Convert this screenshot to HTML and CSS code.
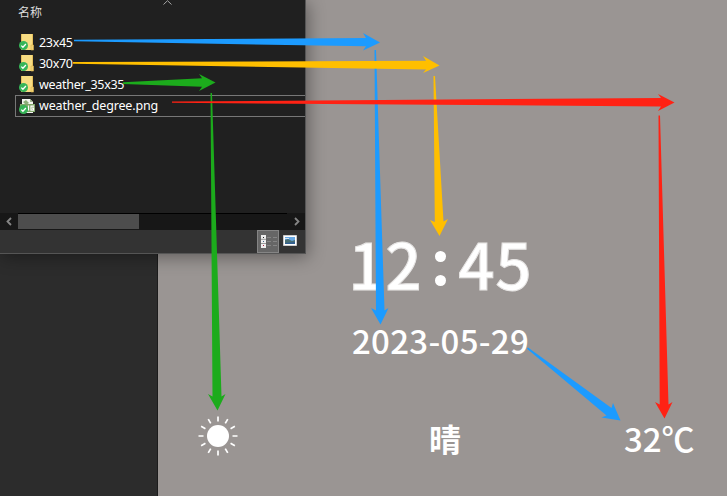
FILE: index.html
```html
<!DOCTYPE html>
<html lang="zh-CN">
<head>
<meta charset="utf-8">
<title>名称</title>
<link rel="stylesheet" href="styles.css">
</head>
<body>
<main class="desktop">
  <div class="side-window"></div>

  <section class="clock">
    <div class="time"><span>1</span><span>2</span><span class="colon"><i></i><i></i></span><span>4</span><span>5</span></div>
    <div class="date">2023-05-29</div>
    <div class="weather">
      <svg class="sun" viewBox="-20 -20 40 40">
        <circle r="11" fill="#fff"/>
        <g stroke="#fff" stroke-width="1.7">
          <path id="rays" d="M0-19.5V-14.5M0 14.5V19.5M-19.5 0H-14.5M14.5 0H19.5"/>
          <use href="#rays" transform="rotate(30)"/>
          <use href="#rays" transform="rotate(60)"/>
        </g>
      </svg>
      <span class="condition">晴</span>
      <span class="degree">32℃</span>
    </div>
  </section>

  <section class="explorer">
    <header class="column-head">
      <span>名称</span>
      <svg class="sort" viewBox="0 0 9 5"><path d="M.5 4.5 4.5.7 8.5 4.5" fill="none" stroke="#a5a5a5"/></svg>
    </header>
    <ul class="files">
      <li><svg class="icon" viewBox="0 0 16 17"><use href="#folder"/></svg><span>23x45</span></li>
      <li><svg class="icon" viewBox="0 0 16 17"><use href="#folder"/></svg><span>30x70</span></li>
      <li><svg class="icon" viewBox="0 0 16 17"><use href="#folder"/></svg><span>weather_35x35</span></li>
      <li class="selected">
        <svg class="icon" viewBox="0 0 16 17">
          <path d="M3 1h8l3 3v11H3z" fill="#f3f6f0"/><path d="M11 1v3h3z" fill="#9cb58e"/>
          <path d="M4 4l3-2 3 3-3 2z" fill="#8cae78"/>
          <path d="M1 6h15v8H1z" fill="#7fa568"/>
          <path d="M9.500 7.500v5M15 8.200h-3v4H14.500v-2H13" fill="none" stroke="#fff" stroke-width="1.200"/>
          <use href="#check"/>
        </svg><span>weather_degree.png</span>
      </li>
    </ul>
    <div class="scrollbar">
      <svg viewBox="0 0 18 16"><path d="M11 4.500 7.500 8l3.500 3.500" fill="none" stroke="#858585" stroke-width="1.800"/></svg>
      <div class="track"><div class="thumb"></div></div>
      <svg viewBox="0 0 18 16"><path d="M8 4.500 11.500 8 8 11.500" fill="none" stroke="#858585" stroke-width="1.800"/></svg>
    </div>
    <footer class="status">
      <span class="view active">
        <svg width="18" height="15" viewBox="0 0 18 15">
          <path d="M2 1h5v13H2z" fill="#eee"/>
          <path d="M2 5.300h5M2 9.500h5" stroke="#999"/>
          <path d="M4 3h1v1H4z" fill="#222"/><path d="M4 7h1v1H4z" fill="#468"/><path d="M4 11h1v1H4z" fill="#a24"/>
          <path d="M8 3.500h4m2 0h4M8 7.500h4m2 0h4M8 11.500h4m2 0h4" stroke="#858585"/>
        </svg>
      </span>
      <span class="view">
        <svg width="14" height="11" viewBox="0 0 14 11">
          <path d="M.5.5h13v10H.5z" fill="#fff" stroke="#ccc"/>
          <path d="M2 2h10v7H2z" fill="#69a9e4"/><path d="M2 5l3-1 4 2 3-1v4H2z" fill="#496f75"/>
          <path d="M2 8l10-1v2H2z" fill="#315f92"/><path d="M2 3h4v1H2z" fill="#d2e6f8"/>
        </svg>
      </span>
    </footer>
  </section>

  <svg class="arrows" viewBox="0 0 727 496">
    <defs>
      <g id="check"><circle cx="4.500" cy="11.500" r="4.500" fill="#36b558"/><path d="M2.300 11.600l1.600 1.600 3-3.200" fill="none" stroke="#fff" stroke-width="1.300"/></g>
      <g id="folder"><path d="M2 0h12v16H2z" fill="#f7dc83"/><path d="M2 0h1v16H2zM13 0h1v11h-1z" fill="#e5bf5b"/><path d="M12 11h2.500v5H12z" fill="#f3d476" stroke="#dbb34d" stroke-width=".6"/><use href="#check"/></g>
    </defs>
    <g fill="#1c9bff">
      <path d="M74 39.800 366 38 363 33 380 42.500 363 50.500 366 46.300 74 41.300z"/>
      <path d="M374.500 50 376 310.500 371 308 380.500 324.500 388.500 308 384.500 310.500 376 50z"/>
      <path d="M528 347.500 611.500 408 613 403 620.500 420.500 601.500 417.500 606.500 415.500 527 348.800z"/>
    </g>
    <g fill="#ffbf00">
      <path d="M73 62 426 60.800 423 56 439.500 65.500 423 73 426 69.500 73 63.700z"/>
      <path d="M433.500 76 434.800 222 430 220 439.500 236 448 219 443.500 221.500 435 76z"/>
    </g>
    <g fill="#1cab1c">
      <path d="M123 82.300 202 78.200 199 74 215.500 82.500 199 91 202 86.700 123 84z"/>
      <path d="M210.500 93 212.500 396.500 208 394 217.500 410.500 225.500 394 221.500 396.500 212 93z"/>
    </g>
    <g fill="#ff2214">
      <path d="M172 101.500 661 98 658 94 674.500 102.500 658 111 661 106.500 172 102.800z"/>
      <path d="M658.500 115.500 659.700 404.500 655 402 664.500 418.500 672.500 402 668.500 404.500 660 115.500z"/>
    </g>
  </svg>
</main>
</body>
</html>
```

FILE: styles.css
```css
* { box-sizing: border-box; }
body { margin: 0; }
.desktop {
  position: relative;
  width: 727px;
  height: 496px;
  overflow: hidden;
  background: #9a9593;
  color: #fff;
}
.side-window {
  position: absolute;
  left: 0;
  top: 240px;
  width: 158px;
  height: 256px;
  background: #2c2c2c;
  border-right: 1px solid #1c1c1c;
}
.clock {
  position: absolute;
  left: 158px;
  top: 222px;
  width: 569px;
  font-family: "Noto Sans CJK SC", sans-serif;
}
.time {
  display: flex;
  margin-left: 190px;
  height: 80px;
  font-size: 64px;
  line-height: 80px;
  font-weight: 500;
  -webkit-text-stroke: 1px #e6e4e3;
}
.time span { width: 37px; text-align: center; }
.time .colon {
  width: 36px;
  display: flex;
  flex-direction: column;
  align-items: center;
  gap: 13px;
  padding-top: 29px;
}
.colon i { width: 11px; height: 11px; border-radius: 50%; background: #fff; }
.date {
  margin-left: 194px;
  height: 70px;
  padding-top: 3px;
  font-size: 33px;
  line-height: 70px;
  font-weight: 500;
  letter-spacing: .3px;
}
.weather { display: flex; align-items: center; height: 68px; margin-top: 30px; padding-left: 40px; }
.sun { width: 40px; height: 40px; }
.condition { margin-left: 191px; width: 32px; padding-top: 4px; font-size: 32px; font-weight: 700; line-height: 68px; }
.degree { margin-left: 163px; padding-top: 4px; font-size: 33px; font-weight: 500; line-height: 68px; white-space: nowrap; }

.explorer {
  position: absolute;
  left: 0;
  top: 0;
  width: 306px;
  height: 254px;
  display: flex;
  flex-direction: column;
  background: #202020;
  border-right: 1px solid #555;
  border-bottom: 1px solid #555;
  box-shadow: 2px 3px 16px rgba(0, 0, 0, .38);
  font-family: "Noto Sans", "Noto Sans CJK SC", sans-serif;
  font-size: 12.500px;
}
.column-head { position: relative; height: 32px; padding-left: 18px; line-height: 25px; font-size: 12px; color: #dedede; }
.sort { position: absolute; left: 163px; top: 0; width: 9px; height: 5px; }
.files { list-style: none; margin: 0; padding: 0 0 0 15px; height: 181px; }
.files li { display: flex; align-items: center; height: 21px; padding-left: 4px; gap: 4px; line-height: 21px; letter-spacing: -.3px; }
.files .selected { height: 22px; border: 1px solid #777; border-right: 0; padding-left: 3px; letter-spacing: -.15px; }
.files .selected span { margin-top: -2px; }
.icon { width: 16px; height: 17px; }
.scrollbar { display: flex; height: 17px; background: #171717; }
.scrollbar svg { width: 18px; height: 17px; }
.track { flex: 1; border-top: 1px solid #000; }
.thumb { width: 121px; height: 15px; background: #4d4d4d; }
.status { display: flex; justify-content: flex-end; height: 23px; padding-right: 4px; background: #333; }
.view { display: flex; align-items: center; justify-content: center; width: 22px; height: 23px; padding-bottom: 2px; }
.view.active { background: #666; border: 1px solid #858585; padding: 0; }
.arrows { position: absolute; left: 0; top: 0; width: 727px; height: 496px; }
```
